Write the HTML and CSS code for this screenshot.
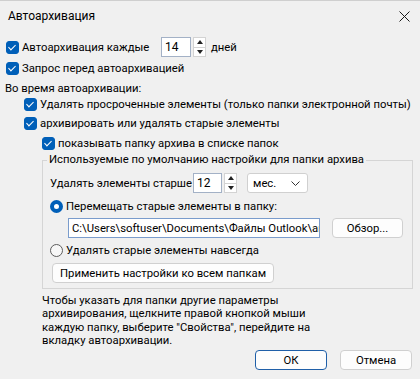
FILE: index.html
```html
<!DOCTYPE html>
<html lang="ru">
<head>
  <meta charset="UTF-8" />
  <title>Автоархивация</title>
  <link rel="stylesheet" href="styles.css">
</head>
<body>
  <div class="dialog">
    <div class="titlebar">
      <span class="title">Автоархивация</span>
      <svg class="close" width="11" height="11" viewBox="0 0 11 11">
        <path d="M0.5 0.5 L10.5 10.5 M10.5 0.5 L0.5 10.5" stroke="#1a1a1a" stroke-width="1" fill="none"/>
      </svg>
    </div>

    <div class="row row-every">
      <label class="check every-label"><span class="box on"></span>Автоархивация каждые</label>
      <span class="edit days">14</span>
      <span class="spin"><span class="up"></span><span class="down"></span></span>
      <span class="unit">дней</span>
    </div>
    <div class="row row-ask">
      <label class="check"><span class="box on"></span>Запрос перед автоархивацией</label>
    </div>
    <div class="row row-during">Во время автоархивации:</div>
    <div class="row row-l2 row-expired">
      <label class="check"><span class="box on"></span>Удалять просроченные элементы (только папки электронной почты)</label>
    </div>
    <div class="row row-l2 row-old">
      <label class="check"><span class="box on"></span>архивировать или удалять старые элементы</label>
    </div>
    <div class="row row-l3 row-show">
      <label class="check"><span class="box on"></span>показывать папку архива в списке папок</label>
    </div>

    <fieldset class="group">
      <legend>Используемые по умолчанию настройки для папки архива</legend>
      <div class="row row-older">
        <span class="older-label">Удалять элементы старше</span>
        <span class="edit months">12</span>
        <span class="spin"><span class="up"></span><span class="down"></span></span>
        <span class="combo">мес.<svg width="9" height="5" viewBox="0 0 9 5"><path d="M0.5 0.5 L4.5 4.5 L8.5 0.5" stroke="#333" fill="none"/></svg></span>
      </div>
      <div class="row row-move">
        <label class="radio"><span class="dot on"></span>Перемещать старые элементы в папку:</label>
      </div>
      <div class="row row-path">
        <span class="edit path">C:\Users\softuser\Documents\Файлы Outlook\ar</span>
        <button class="btn browse">Обзор...</button>
      </div>
      <div class="row row-forever">
        <label class="radio"><span class="dot"></span>Удалять старые элементы навсегда</label>
      </div>
      <button class="btn apply">Применить настройки ко всем папкам</button>
    </fieldset>

    <p class="note">Чтобы указать для папки другие параметры<br>архивирования, щелкните правой кнопкой мыши<br>каждую папку, выберите "Свойства", перейдите на<br>вкладку автоархивации.</p>

    <div class="actions">
      <button class="btn ok">ОК</button>
      <button class="btn">Отмена</button>
    </div>
  </div>
</body>
</html>
```

FILE: styles.css
```css
* { box-sizing: border-box; }
body {
  margin: 0;
  background: #f0f0f0;
  font-family: Roboto, 'Noto Sans', sans-serif;
  font-size: 11.3px;
  color: #000;
}
.dialog {
  width: 420px;
  height: 379px;
  border-top: 1px solid #cfcfcf;
}
.titlebar {
  height: 30px;
  display: flex;
  align-items: center;
  justify-content: space-between;
  padding: 0 10px 0 8px;
}
.title { font-size: 12px; }
.row {
  display: flex;
  align-items: center;
  height: 18px;
  white-space: nowrap;
}
.check, .radio {
  display: flex;
  align-items: center;
  gap: 3px;
}
.box {
  width: 13px;
  height: 13px;
  border-radius: 3px;
  border: 1px solid #5f5f5f;
  background: #fff;
  flex: none;
  position: relative;
}
.box.on {
  background: #005fb8;
  border-color: #005fb8;
}
.box.on::after {
  content: "";
  position: absolute;
  left: 3px;
  top: 1px;
  width: 3px;
  height: 6px;
  border: solid #fff;
  border-width: 0 1.5px 1.5px 0;
  transform: rotate(45deg);
}
.dot {
  width: 13px;
  height: 13px;
  border-radius: 50%;
  border: 1px solid #5c5c5c;
  background: #f7f7f7;
  flex: none;
}
.dot.on {
  border: 4px solid #005fb8;
  background: #fff;
}
.edit {
  height: 20px;
  background: #fff;
  border: 1px solid #a3b1c6;
  display: flex;
  align-items: center;
  padding-left: 3px;
  overflow: hidden;
}
.spin {
  width: 13px;
  height: 20px;
  display: flex;
  flex-direction: column;
  margin-left: 2px;
  background: #fff;
  border: 1px solid #d3d3d3;
}
.spin span {
  flex: 1;
  display: flex;
  align-items: center;
  justify-content: center;
}
.spin .up { border-bottom: 1px solid #d3d3d3; }
.spin .up::after, .spin .down::after {
  content: "";
  border-left: 3px solid transparent;
  border-right: 3px solid transparent;
}
.spin .up::after { border-bottom: 4px solid #222; }
.spin .down::after { border-top: 4px solid #222; }

.row-every { height: 20px; margin-top: 6px; padding-left: 6px; }
.every-label { width: 155px; }
.days { width: 30px; font-size: 12px; }
.unit { margin-left: 5px; }
.row-ask { margin-top: 2px; padding-left: 6px; }
.row-during { margin-top: 2px; padding-left: 5px; }
.row-l2 { padding-left: 24px; }
.row-expired { margin-top: -2px; }
.row-old { margin-top: 1px; }
.row-l3 { padding-left: 42px; margin-top: 2px; }

.group {
  margin: 0 7px 0 42px;
  padding: 0 0 5px 7px;
  border: 1px solid #d5d5d5;
  min-width: 0;
}
.group legend {
  padding: 0 2px;
  margin-left: -3px;
  line-height: 16px;
}
.row-older { height: 20px; margin-top: 5px; }
.older-label { width: 143px; }
.months { width: 29px; font-size: 12px; }
.combo {
  margin-left: 10px;
  width: 61px;
  height: 20px;
  background: #fff;
  border: 1px solid #d0d0d0;
  border-radius: 3px;
  display: flex;
  align-items: center;
  justify-content: space-between;
  padding: 0 7px 0 5px;
}
.row-move { margin-top: 4px; }
.row-path { height: 20px; margin-top: 3px; padding-left: 18px; }
.path {
  width: 252px;
  border-color: #7a9ccc;
  white-space: nowrap;
}
.btn {
  font: inherit;
  color: #000;
  height: 20px;
  padding: 0;
  background: #fdfdfd;
  border: 1px solid #d0d0d0;
  border-radius: 4px;
  white-space: nowrap;
}
.browse { width: 71px; margin-left: 12px; }
.row-forever { margin-top: 3px; }
.apply { display: block; width: 222px; margin: 4px 0 0 2px; }

.note {
  margin: 5px 0 0 42px;
  height: 56px;
  line-height: 13.3px;
}
.actions {
  display: flex;
  justify-content: flex-end;
  gap: 13px;
  padding-right: 8px;
}
.actions .btn { width: 72px; }
.ok { border-color: #1f5fa8; }
```
